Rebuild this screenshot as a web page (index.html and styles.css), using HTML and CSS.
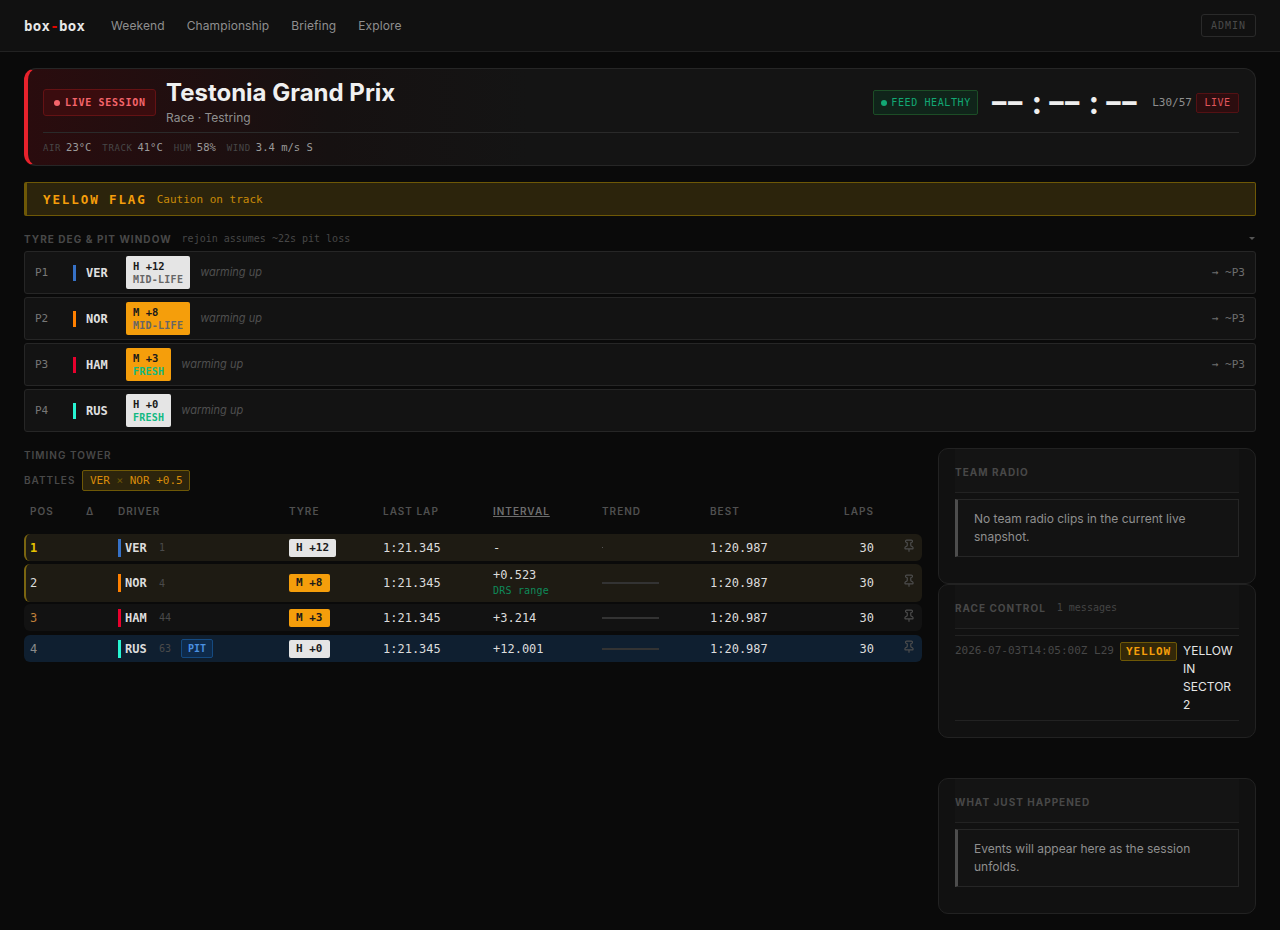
FILE: index.html
```html
<!DOCTYPE html>
<html lang="en">
    <head>
        <meta charset="UTF-8">
        <meta name="viewport" content="width=device-width, initial-scale=1.0">
        <title>box-box</title>
        <link rel="stylesheet" href="styles.css">
    </head>
    <body>
        <header class="topbar">
            <div class="brand">box<span class="brand-dash">-</span>box</div>
            <nav class="nav">
                <a href="#">Weekend</a>
                <a href="#">Championship</a>
                <a href="#">Briefing</a>
                <a href="#">Explore</a>
            </nav>
            <button class="admin">ADMIN</button>
        </header>

        <main class="page">
            <section class="hero">
                <div class="hero-top">
                    <div class="live-badge"><span class="dot"></span>LIVE SESSION</div>
                    <div class="hero-title">
                        <h1>Testonia Grand Prix</h1>
                        <p>Race · Testring</p>
                    </div>
                    <div class="hero-right">
                        <div class="feed-badge"><span class="dot"></span>FEED HEALTHY</div>
                        <div class="clock">
                            <span class="clock-part">━━</span>
                            <span class="clock-sep">:</span>
                            <span class="clock-part">━━</span>
                            <span class="clock-sep">:</span>
                            <span class="clock-part">━━</span>
                        </div>
                        <div class="lap">L30/57</div>
                        <div class="live-tag">LIVE</div>
                    </div>
                </div>
                <div class="weather">
                    <span><b>AIR</b>23°C</span>
                    <span><b>TRACK</b>41°C</span>
                    <span><b>HUM</b>58%</span>
                    <span><b>WIND</b>3.4 m/s S</span>
                </div>
            </section>

            <section class="flag">
                <strong>YELLOW FLAG</strong>
                <span>Caution on track</span>
            </section>

            <section class="deg">
                <div class="deg-head">
                    <h2>TYRE DEG &amp; PIT WINDOW</h2>
                    <span class="deg-note">rejoin assumes ~22s pit loss</span>
                    <span class="caret"></span>
                </div>
                <div class="deg-row">
                    <span class="deg-pos">P1</span>
                    <span class="team-bar ver"></span>
                    <span class="deg-code">VER</span>
                    <div class="deg-chip hard"><span>H +12</span><small>MID-LIFE</small></div>
                    <em>warming up</em>
                    <span class="deg-rejoin">→ ~P3</span>
                </div>
                <div class="deg-row">
                    <span class="deg-pos">P2</span>
                    <span class="team-bar nor"></span>
                    <span class="deg-code">NOR</span>
                    <div class="deg-chip medium"><span>M +8</span><small>MID-LIFE</small></div>
                    <em>warming up</em>
                    <span class="deg-rejoin">→ ~P3</span>
                </div>
                <div class="deg-row">
                    <span class="deg-pos">P3</span>
                    <span class="team-bar ham"></span>
                    <span class="deg-code">HAM</span>
                    <div class="deg-chip medium"><span>M +3</span><small class="fresh">FRESH</small></div>
                    <em>warming up</em>
                    <span class="deg-rejoin">→ ~P3</span>
                </div>
                <div class="deg-row">
                    <span class="deg-pos">P4</span>
                    <span class="team-bar rus"></span>
                    <span class="deg-code">RUS</span>
                    <div class="deg-chip hard"><span>H +0</span><small class="fresh">FRESH</small></div>
                    <em>warming up</em>
                </div>
            </section>

            <div class="columns">
                <section class="tower">
                    <h2>TIMING TOWER</h2>
                    <div class="battles">
                        <span class="battles-label">BATTLES</span>
                        <span class="battle">VER <i>×</i> NOR +0.5</span>
                    </div>
                    <div class="tower-row tower-head">
                        <span>POS</span>
                        <span>Δ</span>
                        <span>DRIVER</span>
                        <span>TYRE</span>
                        <span>LAST LAP</span>
                        <span class="sorted">INTERVAL</span>
                        <span>TREND</span>
                        <span>BEST</span>
                        <span class="laps">LAPS</span>
                        <span></span>
                    </div>

                    <div class="tower-row car battle-row">
                        <span class="pos gold">1</span>
                        <span></span>
                        <span class="driver"><span class="team-bar ver"></span><b>VER</b><small>1</small></span>
                        <span><span class="tyre hard">H +12</span></span>
                        <span>1:21.345</span>
                        <span>-</span>
                        <span><span class="spark-dot"></span></span>
                        <span>1:20.987</span>
                        <span class="laps">30</span>
                        <span class="pin"><svg viewBox="0 0 24 24"><path d="M12 17v5"/><path d="M9 10.76a2 2 0 0 1-1.11 1.79l-1.78.9A2 2 0 0 0 5 15.24V16a1 1 0 0 0 1 1h12a1 1 0 0 0 1-1v-.76a2 2 0 0 0-1.11-1.79l-1.78-.9A2 2 0 0 1 15 10.76V7a1 1 0 0 1 1-1 2 2 0 0 0 0-4H8a2 2 0 0 0 0 4 1 1 0 0 1 1 1z"/></svg></span>
                    </div>
                    <div class="tower-row car battle-row tall">
                        <span class="pos">2</span>
                        <span></span>
                        <span class="driver"><span class="team-bar nor"></span><b>NOR</b><small>4</small></span>
                        <span><span class="tyre medium">M +8</span></span>
                        <span>1:21.345</span>
                        <span class="interval">+0.523<small>DRS range</small></span>
                        <span><span class="spark"></span></span>
                        <span>1:20.987</span>
                        <span class="laps">30</span>
                        <span class="pin"><svg viewBox="0 0 24 24"><path d="M12 17v5"/><path d="M9 10.76a2 2 0 0 1-1.11 1.79l-1.78.9A2 2 0 0 0 5 15.24V16a1 1 0 0 0 1 1h12a1 1 0 0 0 1-1v-.76a2 2 0 0 0-1.11-1.79l-1.78-.9A2 2 0 0 1 15 10.76V7a1 1 0 0 1 1-1 2 2 0 0 0 0-4H8a2 2 0 0 0 0 4 1 1 0 0 1 1 1z"/></svg></span>
                    </div>
                    <div class="tower-row car">
                        <span class="pos bronze">3</span>
                        <span></span>
                        <span class="driver"><span class="team-bar ham"></span><b>HAM</b><small>44</small></span>
                        <span><span class="tyre medium">M +3</span></span>
                        <span>1:21.345</span>
                        <span>+3.214</span>
                        <span><span class="spark"></span></span>
                        <span>1:20.987</span>
                        <span class="laps">30</span>
                        <span class="pin"><svg viewBox="0 0 24 24"><path d="M12 17v5"/><path d="M9 10.76a2 2 0 0 1-1.11 1.79l-1.78.9A2 2 0 0 0 5 15.24V16a1 1 0 0 0 1 1h12a1 1 0 0 0 1-1v-.76a2 2 0 0 0-1.11-1.79l-1.78-.9A2 2 0 0 1 15 10.76V7a1 1 0 0 1 1-1 2 2 0 0 0 0-4H8a2 2 0 0 0 0 4 1 1 0 0 1 1 1z"/></svg></span>
                    </div>
                    <div class="tower-row car in-pit">
                        <span class="pos muted">4</span>
                        <span></span>
                        <span class="driver"><span class="team-bar rus"></span><b>RUS</b><small>63</small><span class="pit">PIT</span></span>
                        <span><span class="tyre hard">H +0</span></span>
                        <span>1:21.345</span>
                        <span>+12.001</span>
                        <span><span class="spark"></span></span>
                        <span>1:20.987</span>
                        <span class="laps">30</span>
                        <span class="pin"><svg viewBox="0 0 24 24"><path d="M12 17v5"/><path d="M9 10.76a2 2 0 0 1-1.11 1.79l-1.78.9A2 2 0 0 0 5 15.24V16a1 1 0 0 0 1 1h12a1 1 0 0 0 1-1v-.76a2 2 0 0 0-1.11-1.79l-1.78-.9A2 2 0 0 1 15 10.76V7a1 1 0 0 1 1-1 2 2 0 0 0 0-4H8a2 2 0 0 0 0 4 1 1 0 0 1 1 1z"/></svg></span>
                    </div>
                </section>

                <aside class="side">
                    <section class="card">
                        <div class="card-head"><h3>TEAM RADIO</h3></div>
                        <div class="empty">No team radio clips in the current live snapshot.</div>
                    </section>
                    <section class="card">
                        <div class="card-head"><h3>RACE CONTROL</h3><span>1 messages</span></div>
                        <div class="message">
                            <span class="msg-time">2026-07-03T14:05:00Z L29</span>
                            <span class="msg-flag">YELLOW</span>
                            <span class="msg-text">YELLOW IN SECTOR 2</span>
                        </div>
                    </section>
                    <section class="card card-spaced">
                        <div class="card-head"><h3>WHAT JUST HAPPENED</h3></div>
                        <div class="empty">Events will appear here as the session unfolds.</div>
                    </section>
                </aside>
            </div>
        </main>
    </body>
</html>
```

FILE: styles.css
```css
* {
    box-sizing: border-box;
}

body {
    margin: 0;
    background: #0a0a0a;
    color: #e5e5e5;
    font-family: Inter, "Noto Sans", sans-serif;
    font-size: 13px;
}

h1, h2, h3, p {
    margin: 0;
}

.topbar {
    display: flex;
    align-items: center;
    height: 52px;
    padding: 0 24px;
    background: #111;
    border-bottom: 1px solid #222;
}

.brand {
    font-family: "DejaVu Sans Mono", monospace;
    font-size: 14px;
    font-weight: 700;
    letter-spacing: 0.3px;
    width: 87px;
    color: #e8e8e8;
}

.brand-dash {
    color: #e10600;
}

.nav {
    display: flex;
    gap: 22px;
}

.nav a {
    color: #8f8f8f;
    font-size: 12px;
    letter-spacing: 0.1px;
    text-decoration: none;
}

.admin {
    margin-left: auto;
    width: 55px;
    height: 23px;
    padding: 0;
    background: transparent;
    border: 1px solid #2a2a2a;
    border-radius: 3px;
    color: #4a4a4a;
    font-family: "DejaVu Sans Mono", monospace;
    font-size: 10px;
    letter-spacing: 1px;
}

.page {
    padding: 16px 24px;
}

.dot {
    display: inline-block;
    width: 6px;
    height: 6px;
    border-radius: 50%;
    background: currentColor;
}

/* session hero */
.hero {
    height: 98px;
    padding: 11px 16px 0 15px;
    background: linear-gradient(90deg, #2a0c0e 0, #161111 300px, #141414 500px);
    border: 1px solid #262626;
    border-left: 4px solid #e8222c;
    border-radius: 12px;
}

.hero-top {
    display: flex;
    align-items: center;
    height: 53px;
    padding-bottom: 7px;
    border-bottom: 1px solid #2a2a2a;
}

.live-badge {
    display: flex;
    align-items: center;
    gap: 5px;
    width: 113px;
    height: 27px;
    padding-left: 10px;
    margin-right: 10px;
    background: #3a0c0e;
    border: 1px solid #641214;
    border-radius: 3px;
    color: #f5656b;
    font-family: "DejaVu Sans Mono", monospace;
    font-size: 10px;
    font-weight: 700;
    letter-spacing: 0.7px;
}

.hero-title {
    margin-top: -2px;
}

.hero-title h1 {
    color: #f0f0f0;
    font-size: 24px;
    font-weight: 700;
    line-height: 30px;
}

.hero-title p {
    margin-top: 2px;
    color: #8f8f8f;
    font-size: 12px;
    line-height: 16px;
}

.hero-right {
    display: flex;
    align-items: center;
    margin-left: auto;
}

.feed-badge {
    display: flex;
    align-items: center;
    gap: 4px;
    width: 105px;
    height: 25px;
    padding-left: 7px;
    background: #10241a;
    border: 1px solid #1c4d26;
    border-radius: 2px;
    color: #12a874;
    font-family: "DejaVu Sans Mono", monospace;
    font-size: 10px;
    letter-spacing: 0.6px;
}

.clock {
    display: flex;
    align-items: center;
    margin: 0 14px;
    color: #eee;
    line-height: 30px;
}

.clock-part {
    font-family: "DejaVu Sans Mono", monospace;
    font-size: 23px;
    letter-spacing: 2px;
    white-space: nowrap;
}

.clock-sep {
    width: 25.4px;
    font-size: 32px;
    font-weight: 700;
    text-align: center;
}

.lap {
    margin-right: 4px;
    color: #8f8f8f;
    font-family: "DejaVu Sans Mono", monospace;
    font-size: 11px;
}

.live-tag {
    width: 43px;
    height: 20px;
    background: #2c0d0f;
    border: 1px solid #541114;
    border-radius: 2px;
    color: #e0555b;
    font-family: "DejaVu Sans Mono", monospace;
    font-size: 10px;
    line-height: 18px;
    text-align: center;
    letter-spacing: 0.5px;
}

.weather {
    display: flex;
    gap: 11px;
    padding-top: 8px;
    color: #9a9a9a;
    font-family: "DejaVu Sans Mono", monospace;
    font-size: 10.5px;
}

.weather b {
    margin-right: 5px;
    color: #474747;
    font-size: 9px;
    font-weight: 400;
    letter-spacing: 0.6px;
}

/* flag banner */
.flag {
    display: flex;
    align-items: center;
    gap: 10px;
    height: 34px;
    margin-top: 16px;
    padding-left: 16px;
    background: #2c240c;
    border: 1px solid #6e5806;
    border-left-width: 3px;
    border-radius: 2px;
    color: #c98a08;
    font-family: "DejaVu Sans Mono", monospace;
    font-size: 11px;
}

.flag strong {
    color: #f59e0b;
    font-size: 12.5px;
    letter-spacing: 1.9px;
}

/* tyre deg */
.deg {
    margin-top: 16px;
}

.deg-head {
    display: flex;
    align-items: center;
    gap: 10px;
    height: 13px;
    margin-bottom: 6px;
}

.deg-head h2 {
    color: #484848;
    font-size: 10px;
    font-weight: 700;
    letter-spacing: 1.05px;
}

.deg-note {
    color: #474747;
    font-family: "DejaVu Sans Mono", monospace;
    font-size: 10px;
}

.caret {
    margin-left: auto;
    margin-right: 1px;
    border: 3px solid transparent;
    border-top: 3px solid #555;
    border-bottom: 0;
}

.deg-row {
    display: flex;
    align-items: center;
    height: 43px;
    margin-bottom: 3px;
    padding: 0 10px;
    background: #131313;
    border: 1px solid #262626;
    border-radius: 3px;
}

.deg-pos {
    width: 38px;
    color: #777;
    font-family: "DejaVu Sans Mono", monospace;
    font-size: 11px;
}

.team-bar {
    display: inline-block;
    flex: none;
    width: 3px;
    height: 16px;
}

.ver { background: #3671c6; }
.nor { background: #ff8000; }
.ham { background: #e8002d; }
.rus { background: #27f4d2; }

.deg-code {
    width: 40px;
    margin-left: 10px;
    color: #e0e0e0;
    font-family: "DejaVu Sans Mono", monospace;
    font-size: 12px;
    font-weight: 700;
}

.deg-chip {
    display: flex;
    flex-direction: column;
    justify-content: center;
    height: 33px;
    padding: 0 7px;
    border-radius: 2px;
    color: #1a1a1a;
    font-family: "DejaVu Sans Mono", monospace;
    font-size: 10.5px;
    font-weight: 700;
    line-height: 13px;
}

.deg-chip small {
    color: #666;
    font-size: 10px;
    line-height: 13px;
    letter-spacing: 0.25px;
}

.deg-chip small.fresh {
    color: #10b981;
}

.hard {
    background: #e5e5e5;
}

.medium {
    background: #f59e0b;
}

.deg-row em {
    margin: 0 0 2px 10px;
    color: #4f4f4f;
    font-size: 11px;
}

.deg-rejoin {
    margin-left: auto;
    color: #6e6e6e;
    font-family: "DejaVu Sans Mono", monospace;
    font-size: 11px;
}

/* timing tower + side column */
.columns {
    display: grid;
    grid-template-columns: 898px 318px;
    gap: 16px;
    margin-top: 16px;
}

.tower h2 {
    color: #484848;
    font-size: 10px;
    font-weight: 600;
    letter-spacing: 1px;
    line-height: 14px;
}

.battles {
    display: flex;
    align-items: flex-end;
    gap: 7px;
    height: 22px;
    margin-top: 7px;
}

.battles-label {
    align-self: center;
    color: #484848;
    font-size: 10px;
    font-weight: 600;
    letter-spacing: 1px;
}

.battle {
    height: 21px;
    padding: 0 6.5px;
    background: #2c240c;
    border: 1px solid #6e5806;
    border-radius: 2px;
    color: #d98c0a;
    font-family: "DejaVu Sans Mono", monospace;
    font-size: 11px;
    line-height: 19px;
}

.battle i {
    color: #6e5806;
    font-style: normal;
}

.tower-row {
    display: grid;
    grid-template-columns: 56px 32px 171px 94px 110px 109px 108px 100px 64px 1fr;
    align-items: center;
    padding-left: 6px;
    font-family: "DejaVu Sans Mono", monospace;
    font-size: 12px;
}

.tower-head {
    height: 22px;
    margin: 9px 0 12px;
    color: #505050;
    font-family: Inter, sans-serif;
    font-size: 10px;
    font-weight: 600;
    letter-spacing: 1px;
}

.sorted {
    color: #6e6e6e;
    text-decoration: underline;
}

.laps {
    text-align: right;
}

.car {
    height: 27px;
    margin-bottom: 3px;
    background: #121212;
    border-radius: 6px;
    color: #dcdcdc;
}

.battle-row {
    background: #1e1b13;
    border-left: 2px solid #7a6510;
    padding-left: 4px;
}

.tall {
    height: 38px;
    margin-bottom: 2px;
}

.in-pit {
    margin-top: 4px;
    background: #0f1f30;
}

.pos {
    font-weight: 400;
}

.gold {
    color: #e6c200;
    font-weight: 700;
}

.bronze {
    color: #c0803a;
}

.muted {
    color: #8a8a8a;
}

.driver {
    display: flex;
    align-items: center;
}

.driver .team-bar {
    height: 18px;
    margin-right: 4px;
}

.driver b {
    width: 34px;
    font-size: 12px;
    font-weight: 700;
}

.driver small {
    width: 22px;
    color: #4a4a4a;
    font-size: 10px;
}

.pit {
    padding: 0 6px;
    height: 19px;
    background: #0e2a4a;
    border: 1px solid #154a80;
    border-radius: 2px;
    color: #4a90e2;
    font-size: 10px;
    font-weight: 700;
    line-height: 17px;
}

.tyre {
    display: inline-block;
    height: 18px;
    padding: 0 7px;
    border-radius: 2px;
    color: #1a1a1a;
    font-size: 11px;
    font-weight: 700;
    line-height: 18px;
}

.interval {
    line-height: 15px;
}

.interval small {
    display: block;
    color: #0e8a5a;
    font-size: 10px;
    line-height: 15px;
    letter-spacing: 0.2px;
}

.spark {
    display: block;
    width: 57px;
    height: 2px;
    background: #333;
}

.spark-dot {
    display: block;
    width: 1px;
    height: 1px;
    background: #555;
}

.pin {
    display: flex;
    justify-content: flex-end;
    margin-top: -4px;
    padding-right: 6px;
}

.pin svg {
    width: 14px;
    height: 14px;
    fill: none;
    stroke: #4d4d4d;
    stroke-width: 2;
}

/* side cards */
.side {
    display: flex;
    flex-direction: column;
}

.card {
    padding: 0 16px 16px;
    background: #111;
    border: 1px solid #222;
    border-radius: 10px;
}

.card-spaced {
    margin-top: 40px;
}

.card-head {
    display: flex;
    align-items: center;
    gap: 11px;
    height: 44px;
    padding-top: 2px;
    background: #141414;
    border-bottom: 1px solid #222;
}

.card-head h3 {
    color: #484848;
    font-size: 10px;
    font-weight: 700;
    letter-spacing: 1px;
}

.card-head span {
    color: #444;
    font-family: "DejaVu Sans Mono", monospace;
    font-size: 10px;
}

.empty {
    margin: 6px 0 10px;
    padding: 10px 16px;
    background: #131313;
    border: 1px solid #262626;
    border-left: 3px solid #4d4d4d;
    color: #8f8f8f;
    font-size: 12px;
    line-height: 18px;
}

.message {
    display: flex;
    gap: 6px;
    margin-top: 6px;
    padding: 6px 0;
    border-top: 1px solid #222;
    border-bottom: 1px solid #222;
}

.msg-time {
    flex: none;
    color: #474747;
    font-family: "DejaVu Sans Mono", monospace;
    font-size: 11px;
    line-height: 18px;
}

.msg-flag {
    flex: none;
    height: 19px;
    padding: 0 5px;
    background: #332808;
    border: 1px solid #6e5806;
    border-radius: 2px;
    color: #f59e0b;
    font-family: "DejaVu Sans Mono", monospace;
    font-size: 11px;
    font-weight: 700;
    line-height: 17px;
    letter-spacing: 0.9px;
}

.msg-text {
    color: #e5e5e5;
    font-size: 12px;
    line-height: 18px;
}
```
